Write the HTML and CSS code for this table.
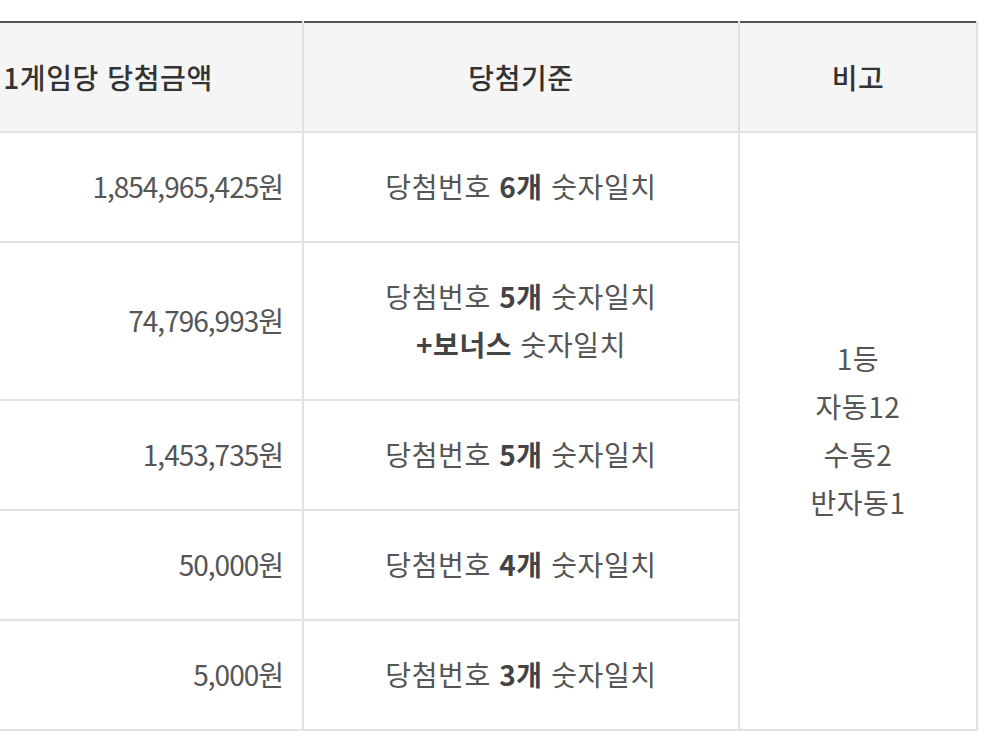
FILE: index.html
```html
<!DOCTYPE html>
<html lang="ko">
<head>
<meta charset="utf-8">
<title>당첨금액</title>
<link rel="stylesheet" href="styles.css">
</head>
<body>
<div class="wrap">
<table class="prize">
  <colgroup>
    <col class="c-amount">
    <col class="c-rule">
    <col class="c-note">
  </colgroup>
  <thead>
    <tr>
      <th>1게임당 당첨금액</th>
      <th>당첨기준</th>
      <th>비고</th>
    </tr>
  </thead>
  <tbody>
    <tr>
      <td class="amt">1,854,965,425원</td>
      <td>당첨번호 <strong>6개</strong> 숫자일치</td>
      <td class="note" rowspan="5">1등<br>자동12<br>수동2<br>반자동1</td>
    </tr>
    <tr class="tall">
      <td class="amt">74,796,993원</td>
      <td>당첨번호 <strong>5개</strong> 숫자일치<br><strong>+보너스</strong> 숫자일치</td>
    </tr>
    <tr>
      <td class="amt">1,453,735원</td>
      <td>당첨번호 <strong>5개</strong> 숫자일치</td>
    </tr>
    <tr>
      <td class="amt">50,000원</td>
      <td>당첨번호 <strong>4개</strong> 숫자일치</td>
    </tr>
    <tr>
      <td class="amt">5,000원</td>
      <td>당첨번호 <strong>3개</strong> 숫자일치</td>
    </tr>
  </tbody>
</table>
</div>
</body>
</html>
```
FILE: styles.css
```css
html, body {
  margin: 0;
  padding: 0;
  background: #ffffff;
}
body {
  font-family: "Noto Sans CJK KR", "Noto Sans", sans-serif;
  color: #555555;
  overflow: hidden;
}
.wrap {
  padding-top: 21px;
  margin-left: -86px;
  width: 1063px;
}
.prize {
  width: 1063px;
  border-collapse: collapse;
  table-layout: fixed;
  border-top: 2px solid #555555;
  font-size: 28px;
  line-height: 48px;
}
.c-amount { width: 389px; }
.c-rule { width: 436px; }
.c-note { width: 238px; }
.prize th,
.prize td {
  border: 2px solid #e2e2e2;
  text-align: center;
  vertical-align: middle;
  padding: 0 20px;
  letter-spacing: 0.6px;
}
.prize th {
  background: #f5f5f5;
  color: #333333;
  font-weight: 500;
  height: 108px;
  border-top: none;
}
.prize td {
  height: 106px;
  padding-bottom: 2px;
}
.prize tr.tall td {
  height: 154px;
}
.prize td.amt {
  text-align: right;
  letter-spacing: -1px;
  padding-right: 19px;
}
.prize strong {
  font-weight: 700;
  color: #444444;
}
.prize td.note {
  line-height: 48px;
}
.prize tr > :first-child {
  border-left: none;
}
```
